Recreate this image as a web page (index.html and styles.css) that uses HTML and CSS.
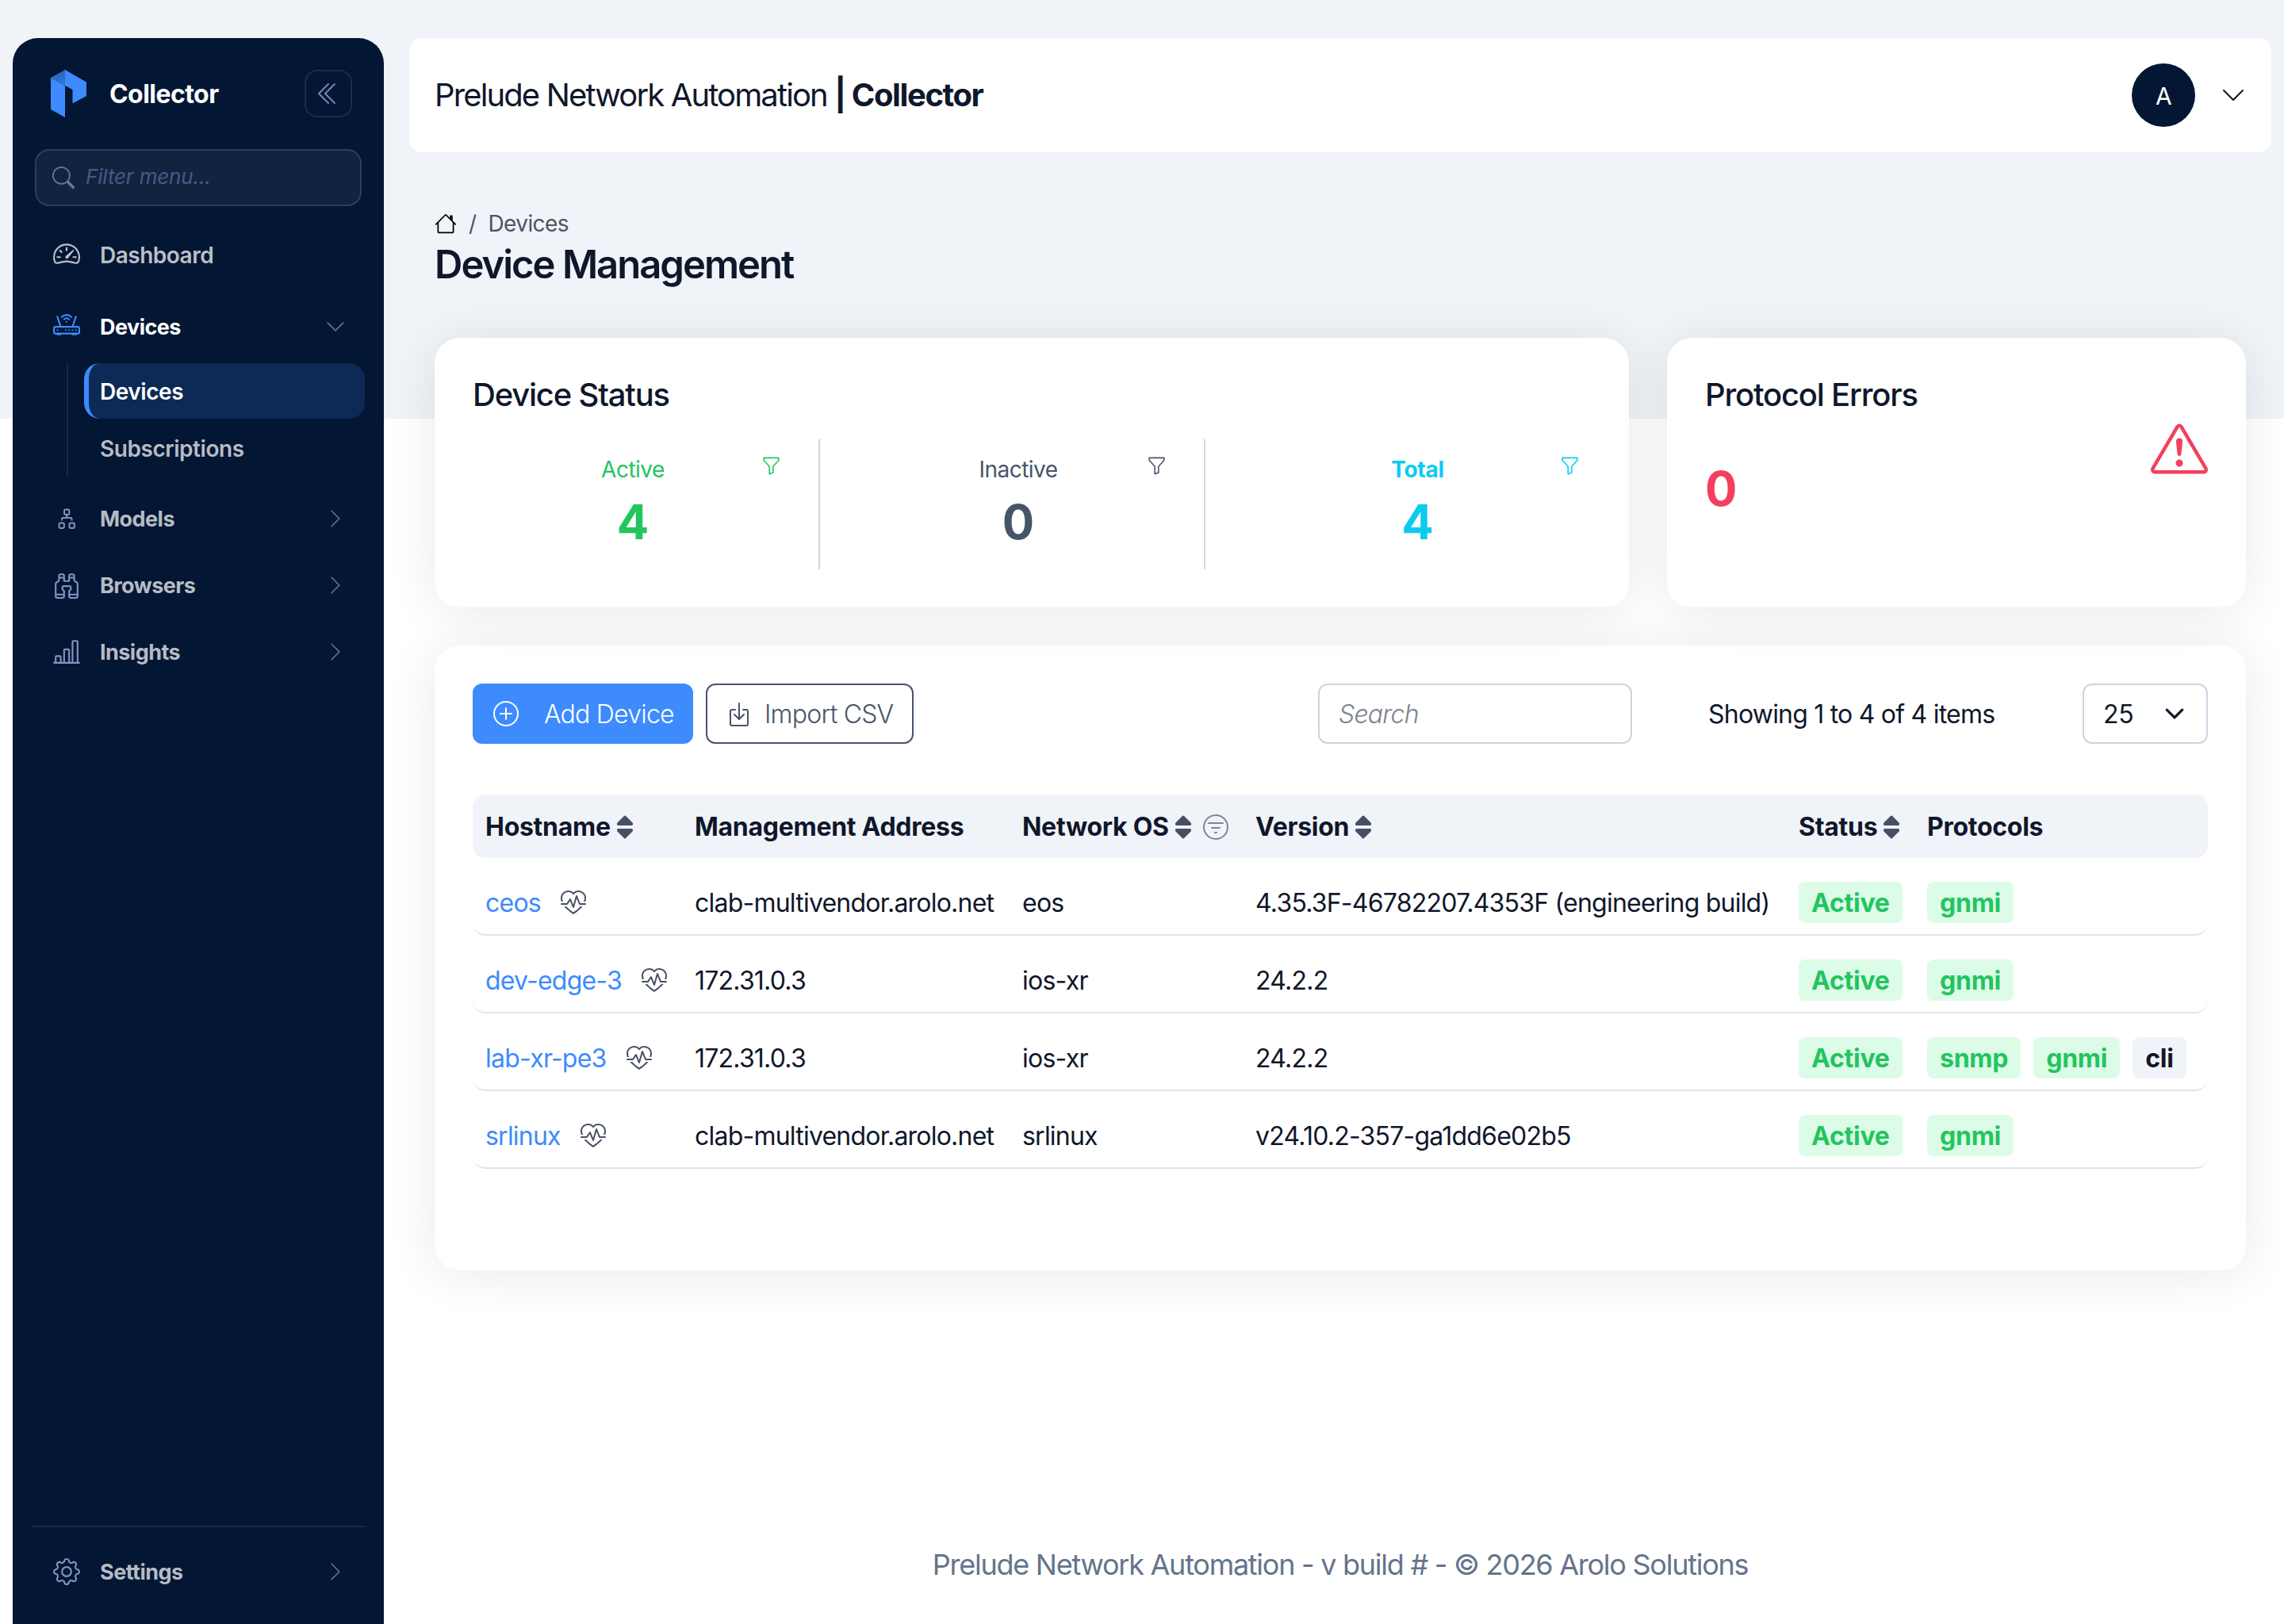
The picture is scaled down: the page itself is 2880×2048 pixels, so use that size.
FILE: index.html
```html
<!DOCTYPE html>
<html lang="en">
<head>
    <meta charset="UTF-8">
    <meta name="viewport" content="width=device-width, initial-scale=1.0">
    <title>Device Management | Collector</title>
    <link rel="stylesheet" href="styles.css">
</head>
<body>
    <!-- Shared icons -->
    <svg class="sprite" aria-hidden="true">
        <symbol id="chevron-down" viewBox="0 0 16 16"><path d="M1.646 4.646a.5.5 0 0 1 .708 0L8 10.293l5.646-5.647a.5.5 0 0 1 .708.708l-6 6a.5.5 0 0 1-.708 0l-6-6a.5.5 0 0 1 0-.708z"/></symbol>
        <symbol id="chevron-right" viewBox="0 0 16 16"><path d="M4.646 1.646a.5.5 0 0 1 .708 0l6 6a.5.5 0 0 1 0 .708l-6 6a.5.5 0 0 1-.708-.708L10.293 8 4.646 2.354a.5.5 0 0 1 0-.708z"/></symbol>
        <symbol id="funnel" viewBox="0 0 16 16"><path d="M1.5 1.5A.5.5 0 0 1 2 1h12a.5.5 0 0 1 .5.5v2a.5.5 0 0 1-.128.334L10 8.692V13.5a.5.5 0 0 1-.342.474l-3 1A.5.5 0 0 1 6 14.5V8.692L1.628 3.834A.5.5 0 0 1 1.5 3.5v-2zm1 .5v1.308l4.372 4.858A.5.5 0 0 1 7 8.5v5.306l2-.666V8.5a.5.5 0 0 1 .128-.334L13.5 3.308V2h-11z"/></symbol>
        <symbol id="sort" viewBox="0 0 22 30"><path d="M11 2 19.500 10.500V11.500H2.500V10.500zM11 28 19.500 19.500V18.500H2.500V19.500z" stroke="currentColor" stroke-width="3" stroke-linejoin="round"/></symbol>
        <symbol id="heart-pulse" viewBox="0 0 16 16"><path d="m8 2.748-.717-.737C5.6.281 2.514.878 1.4 3.053.918 3.995.78 5.323 1.508 7H.43c-2.128-5.697 4.165-8.83 7.394-5.857.06.055.119.112.176.171a3.12 3.12 0 0 1 .176-.17C11.405-1.828 17.7 1.3 15.57 7h-1.078c.728-1.677.59-3.005.108-3.947C13.486.878 10.4.28 8.717 2.01L8 2.748ZM2.212 10h1.315C4.593 11.183 6.05 12.458 8 13.795c1.949-1.337 3.407-2.612 4.473-3.795h1.315c-1.265 1.566-3.14 3.25-5.788 5-2.648-1.75-4.523-3.434-5.788-5Z"/><path d="M10.464 3.314a.5.5 0 0 0-.945.049L7.921 8.956 6.464 5.314a.5.5 0 0 0-.88-.091L3.732 8H.5a.5.5 0 0 0 0 1H4a.5.5 0 0 0 .416-.223l1.473-2.209 1.647 4.118a.5.5 0 0 0 .945-.049l1.598-5.593 1.457 3.642A.5.5 0 0 0 12 9h3.5a.5.5 0 0 0 0-1h-3.162l-1.874-4.686Z"/></symbol>
    </svg>

    <div class="app">
        <aside class="sidebar">
            <div class="brand">
                <svg class="logo" viewBox="0 0 46 60">
                    <defs>
                        <linearGradient id="fold" x1="0" y1="0" x2="0" y2="1">
                            <stop offset="0" stop-color="#2a62b4"/>
                            <stop offset="1" stop-color="#3579dd"/>
                        </linearGradient>
                    </defs>
                    <path d="M0 10 18 20V60L0 50z" fill="#3d8bfd"/>
                    <path d="M0 10 18 0V20z" fill="url(#fold)"/>
                    <path d="M18 0 45 15.500V33L27.500 42.500V25L18 20z" fill="#3d8bfd"/>
                </svg>
                <span class="brand-name">Collector</span>
                <button class="collapse">
                    <svg class="icon-32" viewBox="0 0 16 16"><path d="M8.354 1.646a.5.5 0 0 1 0 .708L2.707 8l5.647 5.646a.5.5 0 0 1-.708.708l-6-6a.5.5 0 0 1 0-.708l6-6a.5.5 0 0 1 .708 0z"/><path d="M12.354 1.646a.5.5 0 0 1 0 .708L6.707 8l5.647 5.646a.5.5 0 0 1-.708.708l-6-6a.5.5 0 0 1 0-.708l6-6a.5.5 0 0 1 .708 0z"/></svg>
                </button>
            </div>

            <div class="menu-filter">
                <svg viewBox="0 0 16 16"><path d="M11.742 10.344a6.5 6.5 0 1 0-1.397 1.398h-.001c.03.04.062.078.098.115l3.85 3.85a1 1 0 0 0 1.415-1.414l-3.85-3.85a1.007 1.007 0 0 0-.115-.1zM12 6.500a5.500 5.500 0 1 1-11 0 5.500 5.500 0 0 1 11 0z"/></svg>
                <span>Filter menu...</span>
            </div>

            <nav class="menu">
                <a class="menu-item link">
                    <svg class="menu-icon" viewBox="0 0 16 16"><path d="M8 4a.5.5 0 0 1 .5.5V6a.5.5 0 0 1-1 0V4.500A.5.5 0 0 1 8 4zM3.732 5.732a.5.5 0 0 1 .707 0l.915.914a.5.5 0 1 1-.708.708l-.914-.915a.5.5 0 0 1 0-.707zM2 10a.5.5 0 0 1 .5-.5h1.586a.5.5 0 0 1 0 1H2.500A.5.5 0 0 1 2 10zm9.500 0a.5.5 0 0 1 .5-.5h1.500a.5.5 0 0 1 0 1H12a.5.5 0 0 1-.5-.5zm.754-4.246a.389.389 0 0 0-.527-.02L7.547 9.310a.91.91 0 1 0 1.302 1.258l3.434-4.297a.389.389 0 0 0-.029-.518z"/><path fill-rule="evenodd" d="M0 10a8 8 0 1 1 15.547 2.661c-.442 1.253-1.845 1.602-2.932 1.250C11.309 13.488 9.475 13 8 13c-1.474 0-3.310.488-4.615.911-1.087.352-2.490.003-2.932-1.250A7.988 7.988 0 0 1 0 10zm8-7a7 7 0 0 0-6.603 9.329c.203.575.923.876 1.680.63C4.397 12.533 6.358 12 8 12s3.604.532 4.923.96c.757.245 1.477-.056 1.680-.631A7 7 0 0 0 8 3z"/></svg>
                    <span>Dashboard</span>
                </a>
                <a class="menu-item open">
                    <svg class="menu-icon" viewBox="0 0 16 16"><path d="M5.525 3.025a3.500 3.500 0 0 1 4.950 0 .5.5 0 1 0 .707-.707 4.500 4.500 0 0 0-6.364 0 .5.5 0 0 0 .707.707Z"/><path d="M6.940 4.440a1.500 1.500 0 0 1 2.120 0 .5.5 0 0 0 .708-.708 2.500 2.500 0 0 0-3.536 0 .5.5 0 0 0 .707.707Z"/><path d="M2.500 11a.5.5 0 1 1 0-1 .5.5 0 0 1 0 1Zm4.500-.5a.5.5 0 1 0 1 0 .5.5 0 0 0-1 0Zm2.500.5a.5.5 0 1 1 0-1 .5.5 0 0 1 0 1Zm1.500-.5a.5.5 0 1 0 1 0 .5.5 0 0 0-1 0Zm2 0a.5.5 0 1 0 1 0 .5.5 0 0 0-1 0Z"/><path d="M2.974 2.342a.5.5 0 1 0-.948.316L3.806 8H1.500A1.500 1.500 0 0 0 0 9.500v2A1.500 1.500 0 0 0 1.500 13H2a.5.5 0 0 0 .5.5h2A.5.5 0 0 0 5 13h6a.5.5 0 0 0 .5.5h2a.5.5 0 0 0 .5-.5h.5a1.500 1.500 0 0 0 1.500-1.500v-2A1.500 1.500 0 0 0 14.500 8h-2.306l1.780-5.342a.5.5 0 1 0-.948-.316L11.140 8H4.860L2.974 2.342ZM14.500 9a.5.5 0 0 1 .5.5v2a.5.5 0 0 1-.5.5h-13a.5.5 0 0 1-.5-.5v-2a.5.5 0 0 1 .5-.5h13Z"/><path d="M8.500 5.500a.5.5 0 1 1-1 0 .5.5 0 0 1 1 0Z"/></svg>
                    <span>Devices</span>
                    <svg class="menu-arrow"><use href="#chevron-down"/></svg>
                </a>
                <div class="submenu">
                    <a class="submenu-item active">Devices</a>
                    <a class="submenu-item">Subscriptions</a>
                </div>
                <a class="menu-item">
                    <svg class="menu-icon line-icon" viewBox="0 0 34 34"><rect x="14" y="5.500" width="6.400" height="6.400" rx="2"/><rect x="7.500" y="22.500" width="6.400" height="6.400" rx="2"/><rect x="20.500" y="22.500" width="6.400" height="6.400" rx="2"/><path d="M17.200 12v4M11 19.500V17.500Q11 16 12.500 16h9.500Q23.500 16 23.500 17.500v2"/></svg>
                    <span>Models</span>
                    <svg class="menu-arrow"><use href="#chevron-right"/></svg>
                </a>
                <a class="menu-item">
                    <svg class="menu-icon" viewBox="0 0 16 16"><path d="M3 2.500A1.500 1.500 0 0 1 4.500 1h1A1.500 1.500 0 0 1 7 2.500V5h2V2.500A1.500 1.500 0 0 1 10.500 1h1A1.500 1.500 0 0 1 13 2.500v2.382a.5.5 0 0 0 .276.447l.895.447A1.500 1.500 0 0 1 15 7.118V14.500a1.500 1.500 0 0 1-1.500 1.500h-3A1.500 1.500 0 0 1 9 14.500v-3a.5.5 0 0 1 .146-.354l.854-.853V9.500a.5.5 0 0 0-.5-.5h-3a.5.5 0 0 0-.5.5v.793l.854.853A.5.5 0 0 1 7 11.500v3A1.500 1.500 0 0 1 5.500 16h-3A1.500 1.500 0 0 1 1 14.500V7.118a1.500 1.500 0 0 1 .83-1.342l.894-.447A.5.5 0 0 0 3 4.882V2.500zM4.500 2a.5.5 0 0 0-.5.5V3h2v-.5a.5.5 0 0 0-.5-.5h-1zM6 4H4v.882a1.500 1.500 0 0 1-.83 1.342l-.894.447A.5.5 0 0 0 2 7.118V13h4v-1.293l-.854-.853A.5.5 0 0 1 5 10.500v-1A1.500 1.500 0 0 1 6.500 8h3A1.500 1.500 0 0 1 11 9.500v1a.5.5 0 0 1-.146.354l-.854.853V13h4V7.118a.5.5 0 0 0-.276-.447l-.895-.447A1.500 1.500 0 0 1 12 4.882V4h-2v1.500a.5.5 0 0 1-.5.5h-3a.5.5 0 0 1-.5-.5V4zm4-1h2v-.5a.5.5 0 0 0-.5-.5h-1a.5.5 0 0 0-.5.5V3zm4 11h-4v.5a.5.5 0 0 0 .5.5h3a.5.5 0 0 0 .5-.5V14zm-8 0H2v.5a.5.5 0 0 0 .5.5h3a.5.5 0 0 0 .5-.5V14z"/></svg>
                    <span>Browsers</span>
                    <svg class="menu-arrow"><use href="#chevron-right"/></svg>
                </a>
                <a class="menu-item">
                    <svg class="menu-icon" viewBox="0 0 16 16"><path d="M11 2a1 1 0 0 1 1-1h2a1 1 0 0 1 1 1v12h.5a.5.5 0 0 1 0 1H.5a.5.5 0 0 1 0-1H1v-3a1 1 0 0 1 1-1h2a1 1 0 0 1 1 1v3h1V7a1 1 0 0 1 1-1h2a1 1 0 0 1 1 1v7h1V2zm1 12h2V2h-2v12zm-3 0V7H7v7h2zm-5 0v-3H2v3h2z"/></svg>
                    <span>Insights</span>
                    <svg class="menu-arrow"><use href="#chevron-right"/></svg>
                </a>
            </nav>

            <div class="menu-bottom">
                <a class="menu-item">
                    <svg class="menu-icon" viewBox="0 0 16 16"><path d="M8 4.754a3.246 3.246 0 1 0 0 6.492 3.246 3.246 0 0 0 0-6.492zM5.754 8a2.246 2.246 0 1 1 4.492 0 2.246 2.246 0 0 1-4.492 0z"/><path d="M9.796 1.343c-.527-1.790-3.065-1.790-3.592 0l-.094.319a.873.873 0 0 1-1.255.52l-.292-.16c-1.640-.892-3.433.902-2.540 2.541l.159.292a.873.873 0 0 1-.52 1.255l-.319.094c-1.790.527-1.790 3.065 0 3.592l.319.094a.873.873 0 0 1 .52 1.255l-.16.292c-.892 1.640.901 3.434 2.541 2.540l.292-.159a.873.873 0 0 1 1.255.52l.094.319c.527 1.790 3.065 1.790 3.592 0l.094-.319a.873.873 0 0 1 1.255-.52l.292.16c1.640.893 3.434-.902 2.540-2.541l-.159-.292a.873.873 0 0 1 .52-1.255l.319-.094c1.790-.527 1.790-3.065 0-3.592l-.319-.094a.873.873 0 0 1-.52-1.255l.16-.292c.893-1.640-.902-3.433-2.541-2.540l-.292.159a.873.873 0 0 1-1.255-.52l-.094-.319zm-2.633.283c.246-.835 1.428-.835 1.674 0l.094.319a1.873 1.873 0 0 0 2.693 1.115l.291-.16c.764-.415 1.600.42 1.184 1.185l-.159.292a1.873 1.873 0 0 0 1.116 2.692l.318.094c.835.246.835 1.428 0 1.674l-.319.094a1.873 1.873 0 0 0-1.115 2.693l.16.291c.415.764-.42 1.600-1.185 1.184l-.291-.159a1.873 1.873 0 0 0-2.693 1.116l-.094.318c-.246.835-1.428.835-1.674 0l-.094-.319a1.873 1.873 0 0 0-2.692-1.115l-.292.16c-.764.415-1.600-.42-1.184-1.185l.159-.291A1.873 1.873 0 0 0 1.945 8.930l-.319-.094c-.835-.246-.835-1.428 0-1.674l.319-.094A1.873 1.873 0 0 0 3.060 4.377l-.16-.292c-.415-.764.42-1.600 1.185-1.184l.292.159a1.873 1.873 0 0 0 2.692-1.115l.094-.319z"/></svg>
                    <span>Settings</span>
                    <svg class="menu-arrow"><use href="#chevron-right"/></svg>
                </a>
            </div>
        </aside>

        <main class="main">
            <header class="topbar">
                <div class="topbar-title">Prelude Network Automation <b>| Collector</b></div>
                <div class="avatar">A</div>
                <svg class="user-arrow"><use href="#chevron-down"/></svg>
            </header>

            <div class="content">
                <div class="breadcrumb">
                    <svg class="home" viewBox="0 0 16 16"><path d="M2 13.500V7h1v6.500a.5.5 0 0 0 .5.5h9a.5.5 0 0 0 .5-.5V7h1v6.500a1.500 1.500 0 0 1-1.500 1.500h-9A1.500 1.500 0 0 1 2 13.500zm11-11V6l-2-2V2.500a.5.5 0 0 1 .5-.5h1a.5.5 0 0 1 .5.5z"/><path d="M7.293 1.500a1 1 0 0 1 1.414 0l6.647 6.646a.5.5 0 0 1-.708.708L8 2.207 1.354 8.854a.5.5 0 1 1-.708-.708L7.293 1.500z"/></svg>
                    <span>/</span>
                    <span>Devices</span>
                </div>
                <h1>Device Management</h1>

                <div class="summary">
                    <section class="card status-card">
                        <h2>Device Status</h2>
                        <div class="stats">
                            <div class="stat green">
                                <div class="stat-body">
                                    <div class="stat-label">Active</div>
                                    <div class="number">4</div>
                                </div>
                                <svg class="stat-filter"><use href="#funnel"/></svg>
                            </div>
                            <div class="stat gray">
                                <div class="stat-body">
                                    <div class="stat-label">Inactive</div>
                                    <div class="number">0</div>
                                </div>
                                <svg class="stat-filter"><use href="#funnel"/></svg>
                            </div>
                            <div class="stat cyan selected">
                                <div class="stat-body">
                                    <div class="stat-label">Total</div>
                                    <div class="number">4</div>
                                </div>
                                <svg class="stat-filter"><use href="#funnel"/></svg>
                            </div>
                        </div>
                    </section>

                    <section class="card errors-card">
                        <div>
                            <h2>Protocol Errors</h2>
                            <div class="number">0</div>
                        </div>
                        <svg class="warning" viewBox="0 0 16 16"><path d="M7.938 2.016A.13.13 0 0 1 8.002 2a.13.13 0 0 1 .063.016.146.146 0 0 1 .054.057l6.857 11.667c.036.06.035.124.002.183a.163.163 0 0 1-.054.06.116.116 0 0 1-.066.017H1.146a.115.115 0 0 1-.066-.017.163.163 0 0 1-.054-.06.176.176 0 0 1 .002-.183L7.884 2.073a.147.147 0 0 1 .054-.057zm1.044-.45a1.130 1.130 0 0 0-1.960 0L.165 13.233c-.457.778.091 1.767.98 1.767h13.713c.889 0 1.438-.99.98-1.767L8.982 1.566z"/><path d="M7.002 12a1 1 0 1 1 2 0 1 1 0 0 1-2 0zM7.100 5.995a.905.905 0 1 1 1.800 0l-.35 3.507a.552.552 0 0 1-1.100 0L7.100 5.995z"/></svg>
                    </section>
                </div>

                <section class="card table-card">
                    <div class="toolbar">
                        <button class="btn btn-primary">
                            <svg class="icon-32" viewBox="0 0 16 16"><path d="M8 15A7 7 0 1 1 8 1a7 7 0 0 1 0 14zm0 1A8 8 0 1 0 8 0a8 8 0 0 0 0 16z"/><path d="M8 4a.5.5 0 0 1 .5.5v3h3a.5.5 0 0 1 0 1h-3v3a.5.5 0 0 1-1 0v-3h-3a.5.5 0 0 1 0-1h3v-3A.5.5 0 0 1 8 4z"/></svg>
                            <span>Add Device</span>
                        </button>
                        <button class="btn btn-outline">
                            <svg class="icon-32" viewBox="0 0 16 16"><path d="M3.500 6a.5.5 0 0 0-.5.5v8a.5.5 0 0 0 .5.5h9a.5.5 0 0 0 .5-.5v-8a.5.5 0 0 0-.5-.5h-2a.5.5 0 0 1 0-1h2A1.500 1.500 0 0 1 14 6.500v8a1.500 1.500 0 0 1-1.500 1.500h-9A1.500 1.500 0 0 1 2 14.500v-8A1.500 1.500 0 0 1 3.500 5h2a.5.5 0 0 1 0 1h-2z"/><path d="M7.646 11.854a.5.5 0 0 0 .708 0l3-3a.5.5 0 0 0-.708-.708L8.500 10.293V1.500a.5.5 0 0 0-1 0v8.793L5.354 8.146a.5.5 0 1 0-.708.708l3 3z"/></svg>
                            <span>Import CSV</span>
                        </button>
                        <div class="search">Search</div>
                        <div class="showing">Showing 1 to 4 of 4 items</div>
                        <div class="page-size">
                            <span>25</span>
                            <svg viewBox="0 0 16 16"><path d="m2 5 6 6 6-6" fill="none" stroke="currentColor" stroke-width="2" stroke-linecap="round" stroke-linejoin="round"/></svg>
                        </div>
                    </div>

                    <table class="devices">
                        <colgroup>
                            <col class="col-host">
                            <col class="col-address">
                            <col class="col-os">
                            <col class="col-version">
                            <col class="col-status">
                            <col>
                        </colgroup>
                        <thead>
                            <tr>
                                <th><div class="cell">Hostname<svg class="sort"><use href="#sort"/></svg></div></th>
                                <th><div class="cell">Management Address</div></th>
                                <th><div class="cell">Network OS<svg class="sort"><use href="#sort"/></svg><svg class="col-filter" viewBox="0 0 16 16"><path d="M8 15A7 7 0 1 1 8 1a7 7 0 0 1 0 14zm0 1A8 8 0 1 0 8 0a8 8 0 0 0 0 16z"/><path d="M7 11.500a.5.5 0 0 1 .5-.5h1a.5.5 0 0 1 0 1h-1a.5.5 0 0 1-.5-.5zm-2-3a.5.5 0 0 1 .5-.5h5a.5.5 0 0 1 0 1h-5a.5.5 0 0 1-.5-.5zm-2-3a.5.5 0 0 1 .5-.5h9a.5.5 0 0 1 0 1h-9a.5.5 0 0 1-.5-.5z"/></svg></div></th>
                                <th><div class="cell">Version<svg class="sort"><use href="#sort"/></svg></div></th>
                                <th><div class="cell">Status<svg class="sort"><use href="#sort"/></svg></div></th>
                                <th><div class="cell">Protocols</div></th>
                            </tr>
                        </thead>
                        <tbody>
                            <tr>
                                <td><div class="cell"><a>ceos</a><svg class="pulse"><use href="#heart-pulse"/></svg></div></td>
                                <td>clab-multivendor.arolo.net</td>
                                <td>eos</td>
                                <td>4.35.3F-46782207.4353F (engineering build)</td>
                                <td><div class="cell"><span class="badge">Active</span></div></td>
                                <td><div class="cell badges"><span class="badge">gnmi</span></div></td>
                            </tr>
                            <tr>
                                <td><div class="cell"><a>dev-edge-3</a><svg class="pulse"><use href="#heart-pulse"/></svg></div></td>
                                <td>172.31.0.3</td>
                                <td>ios-xr</td>
                                <td>24.2.2</td>
                                <td><div class="cell"><span class="badge">Active</span></div></td>
                                <td><div class="cell badges"><span class="badge">gnmi</span></div></td>
                            </tr>
                            <tr>
                                <td><div class="cell"><a>lab-xr-pe3</a><svg class="pulse"><use href="#heart-pulse"/></svg></div></td>
                                <td>172.31.0.3</td>
                                <td>ios-xr</td>
                                <td>24.2.2</td>
                                <td><div class="cell"><span class="badge">Active</span></div></td>
                                <td><div class="cell badges"><span class="badge">snmp</span><span class="badge">gnmi</span><span class="badge plain">cli</span></div></td>
                            </tr>
                            <tr>
                                <td><div class="cell"><a>srlinux</a><svg class="pulse"><use href="#heart-pulse"/></svg></div></td>
                                <td>clab-multivendor.arolo.net</td>
                                <td>srlinux</td>
                                <td>v24.10.2-357-ga1dd6e02b5</td>
                                <td><div class="cell"><span class="badge">Active</span></div></td>
                                <td><div class="cell badges"><span class="badge">gnmi</span></div></td>
                            </tr>
                        </tbody>
                    </table>
                </section>
            </div>

            <footer>Prelude Network Automation - v build # - © 2026 Arolo Solutions</footer>
        </main>
    </div>
</body>
</html>
```
FILE: styles.css
```css
* {
    box-sizing: border-box;
}
body {
    margin: 0;
    font-family: Inter, "Liberation Sans", sans-serif;
    font-size: 32px;
    line-height: 48px;
    letter-spacing: -.78px;
    color: #0f172a;
    background: linear-gradient(#f0f3f8 528px, #fff 528px);
}
svg {
    fill: currentColor;
    flex: none;
}
button {
    font: inherit;
    letter-spacing: inherit;
}
.sprite {
    display: none;
}
.icon-32 {
    width: 32px;
    height: 32px;
}
.app {
    display: flex;
    gap: 32px;
    height: 2048px;
    padding: 48px 16px 0;
}

/* Sidebar */
.sidebar {
    display: flex;
    flex-direction: column;
    width: 468px;
    padding: 40px 24px 0;
    border-radius: 32px 32px 0 0;
    background: #031633;
    color: #b7bbc5;
}
.brand {
    display: flex;
    align-items: center;
    height: 60px;
    padding: 0 16px 0 24px;
}
.logo {
    width: 46px;
    height: 60px;
}
.brand-name {
    margin-left: 28px;
    padding-top: 2px;
    font-weight: 700;
    letter-spacing: -.55px;
    color: #fff;
}
.collapse {
    display: flex;
    align-items: center;
    justify-content: center;
    width: 60px;
    height: 60px;
    margin-left: auto;
    padding: 0;
    border: 2px solid rgba(255, 255, 255, .1);
    border-radius: 16px;
    background: none;
    color: #7587b8;
}
.menu-filter {
    display: flex;
    align-items: center;
    gap: 14px;
    height: 72px;
    margin: 40px 4px 20px;
    padding: 0 20px;
    border: 2px solid rgba(255, 255, 255, .12);
    border-radius: 18px;
    background: rgba(255, 255, 255, .06);
    color: #6277ab;
    font-size: 26px;
    font-style: italic;
    letter-spacing: -.15px;
}
.menu-filter svg {
    width: 28px;
    height: 28px;
}
.menu-filter span {
    padding-bottom: 2px;
    color: #475985;
}
.menu-item {
    display: flex;
    align-items: center;
    height: 84px;
    padding: 0 24px 0 27px;
    font-size: 27px;
    font-weight: 700;
    letter-spacing: -.55px;
}
.menu-item span {
    padding-top: 2px;
}
.menu-item.link {
    margin-bottom: 6px;
    font-size: 28px;
    font-weight: 600;
    letter-spacing: -.5px;
    color: #bcbfc6;
}
.menu-item.link span {
    padding-top: 0;
}
.menu-item.open {
    color: #fff;
}
.menu-icon {
    width: 34px;
    height: 34px;
    margin-right: 25px;
    color: #8094c2;
}
.line-icon {
    fill: none;
    stroke: currentColor;
    stroke-width: 2px;
}
.link .menu-icon {
    margin-bottom: 5px;
    color: #bcbfc6;
}
.open .menu-icon {
    margin-bottom: 3px;
    color: #3d8bfd;
}
.menu-arrow {
    width: 26px;
    height: 26px;
    margin-left: auto;
    color: #5f73a8;
}
.submenu {
    display: flex;
    flex-direction: column;
    gap: 2px;
    margin: 4px 0 12px 44px;
    padding-left: 20px;
    border-left: 2px solid #182945;
}
.submenu-item {
    height: 70px;
    padding-left: 14px;
    border-left: 6px solid transparent;
    border-radius: 20px;
    font-size: 28px;
    font-weight: 600;
    letter-spacing: -.45px;
    line-height: 72px;
}
.submenu-item.active {
    border-left-color: #3d8bfd;
    background: #0c2a55;
    color: #fff;
}
.menu-bottom {
    margin-top: auto;
    padding: 14px 0 24px;
    border-top: 2px solid #182842;
}

/* Top bar */
.main {
    display: flex;
    flex-direction: column;
    flex: 1;
}
.topbar {
    display: flex;
    align-items: center;
    height: 144px;
    padding: 0 32px;
    border-radius: 16px;
    background: #fff;
}
.topbar-title {
    margin-right: auto;
    font-size: 40px;
    letter-spacing: -1.87px;
}
.topbar-title b {
    font-weight: 700;
    letter-spacing: -1.4px;
}
.avatar {
    width: 80px;
    height: 80px;
    border-radius: 50%;
    background: #031633;
    color: #fff;
    font-size: 30px;
    line-height: 82px;
    text-align: center;
}
.user-arrow {
    width: 32px;
    height: 32px;
    margin-left: 32px;
}

/* Page */
.content {
    padding: 66px 32px 0;
}
.breadcrumb {
    display: flex;
    align-items: center;
    gap: 15px;
    height: 48px;
    font-size: 28px;
    letter-spacing: -.6px;
    color: #4b5565;
}
.home {
    width: 28px;
    height: 28px;
    color: #000;
}
h1 {
    margin: 0 0 65px;
    font-size: 49px;
    font-weight: 600;
    letter-spacing: -2px;
    line-height: 55px;
}
h2 {
    margin: 0;
    font-size: 40px;
    font-weight: 500;
    letter-spacing: -1.2px;
}
.card {
    border-radius: 32px;
    background: #fff;
    box-shadow: 0 4px 64px rgba(0, 0, 0, .09);
}
.summary {
    display: grid;
    grid-template-columns: 1506px 1fr;
    gap: 48px;
    height: 340px;
}
.status-card h2 {
    padding: 48px 48px 0;
}
.stats {
    display: grid;
    grid-template-columns: 486px 486px 1fr;
    margin-top: 32px;
}
.stat {
    display: flex;
    height: 164px;
    padding: 14px 47px 0 88px;
    border-right: 2px solid #cbd5e1;
}
.stat:last-child {
    padding-right: 62px;
    border-right: 0;
}
.stat-body {
    flex: 1;
    text-align: center;
}
.stat-label {
    font-size: 28px;
    letter-spacing: -.5px;
}
.selected .stat-label {
    font-weight: 700;
    letter-spacing: -.3px;
}
.stat-filter {
    width: 25px;
    height: 25px;
    margin-top: 7px;
}
.number {
    font-size: 60px;
    font-weight: 700;
    line-height: 85px;
    letter-spacing: 0;
}
.green {
    color: #22c55e;
}
.gray {
    color: #475569;
}
.cyan {
    color: #0dcaf0;
}
.errors-card {
    display: flex;
    justify-content: space-between;
    padding: 48px;
}
.errors-card .number {
    margin-top: 52px;
    color: #f43f5e;
}
.warning {
    width: 72px;
    height: 72px;
    margin-top: 56px;
    color: #f43f5e;
}

/* Device table */
.table-card {
    height: 788px;
    margin-top: 48px;
    padding: 48px;
}
.toolbar {
    display: flex;
    align-items: center;
    height: 76px;
    margin-bottom: 64px;
    white-space: nowrap;
}
.btn {
    display: flex;
    align-items: center;
    height: 76px;
    border: 2px solid #475569;
    border-radius: 12px;
    background: none;
    color: #475569;
    font-weight: 300;
}
.btn span,
.showing,
.page-size span {
    padding-top: 2px;
}
.btn-primary {
    width: 278px;
    gap: 32px;
    margin-right: 16px;
    padding: 0 24px;
    border-color: #3d8bfd;
    background: #3d8bfd;
    color: #fff;
}
.btn-outline {
    width: 262px;
    gap: 16px;
    padding: 0 24px;
}
.search {
    width: 396px;
    height: 76px;
    margin-left: auto;
    padding: 0 24px;
    border: 2px solid #cbd5e1;
    border-radius: 12px;
    color: #7c828f;
    font-style: italic;
    font-weight: 300;
    line-height: 74px;
}
.showing {
    width: 360px;
    margin: 0 112px 0 96px;
}
.page-size {
    display: flex;
    align-items: center;
    justify-content: space-between;
    width: 158px;
    height: 76px;
    padding: 0 27px 0 24px;
    border: 2px solid #cbd5e1;
    border-radius: 12px;
    letter-spacing: -.2px;
}
.page-size svg {
    width: 26px;
    height: 26px;
}
.devices {
    width: 100%;
    table-layout: fixed;
    border-spacing: 0;
    white-space: nowrap;
}
.col-host {
    width: 264px;
}
.col-address {
    width: 413px;
}
.col-os {
    width: 294px;
}
.col-version {
    width: 685px;
}
.col-status {
    width: 162px;
}
th {
    height: 80px;
    padding: 2px 0 0 16px;
    background: #f0f3f8;
    font-weight: 700;
    letter-spacing: -.28px;
    text-align: left;
}
th:first-child {
    border-radius: 16px 0 0 16px;
}
th:last-child {
    border-radius: 0 16px 16px 0;
}
td {
    height: 98px;
    padding: 31px 0 13px 16px;
    border-bottom: 2px solid #e2e4ea;
}
td:first-child {
    border-bottom-left-radius: 16px;
}
td:last-child {
    border-bottom-right-radius: 16px;
}
td:nth-last-child(-n+2) {
    padding-top: 30px;
    padding-bottom: 14px;
}
.cell {
    display: flex;
    align-items: center;
}
.cell a {
    color: #3d8bfd;
}
.sort {
    width: 22px;
    height: 30px;
    margin-left: 7px;
    color: #475063;
}
.col-filter {
    width: 32px;
    height: 32px;
    margin-left: 14px;
    color: #7f8593;
}
.pulse {
    width: 32px;
    height: 32px;
    margin-left: 25px;
    color: #475063;
}
.badges {
    gap: 16px;
}
.badge {
    height: 52px;
    padding: 0 16px;
    border-radius: 8px;
    background: #dcfce7;
    color: #22c55e;
    font-weight: 700;
    letter-spacing: -.25px;
    line-height: 53px;
}
.badge.plain {
    background: #f0f3f8;
    color: #0f172a;
}

footer {
    margin-top: auto;
    padding-bottom: 51px;
    color: #64748b;
    font-size: 36px;
    letter-spacing: -1.26px;
    text-align: center;
}
```
